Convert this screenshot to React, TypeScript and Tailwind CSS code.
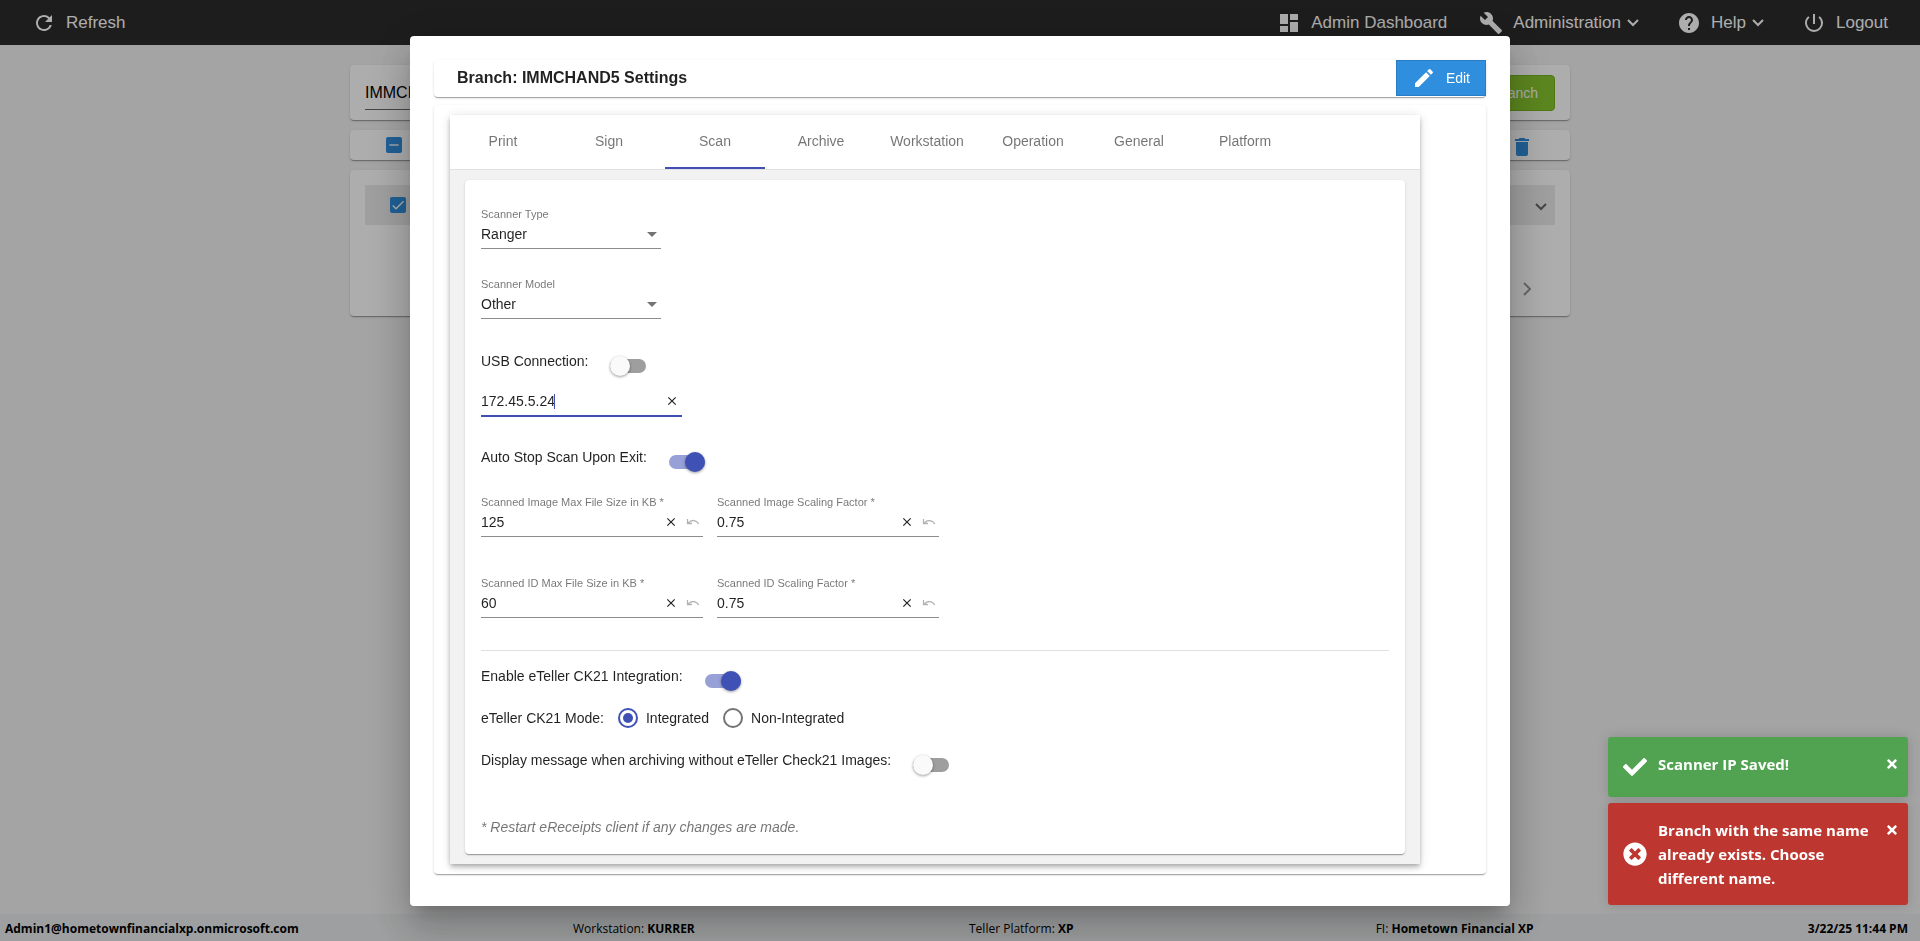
import { useState } from 'react';
import type { ReactNode } from 'react';
import {
    MdBuild,
    MdCheck,
    MdClose,
    MdCreate,
    MdDashboard,
    MdDelete,
    MdHelp,
    MdPowerSettingsNew,
    MdRefresh,
    MdRemove,
} from 'react-icons/md';
import { FaCheck, FaTimes, FaTimesCircle } from 'react-icons/fa';

const cardShadow = 'shadow-[0_2px_1px_-1px_rgba(0,0,0,0.2),0_1px_1px_0_rgba(0,0,0,0.14),0_1px_3px_0_rgba(0,0,0,0.12)]';

const tabs = ['Print', 'Sign', 'Scan', 'Archive', 'Workstation', 'Operation', 'General', 'Platform'];

function Chevron({ className }: { className?: string }) {
    return (
        <svg viewBox="0 0 12 8" className={className} fill="none" stroke="currentColor" strokeWidth="2">
            <path d="M1 1l5 5 5-5" />
        </svg>
    );
}

function NavItem({ icon, label, menu }: { icon: ReactNode; label: string; menu?: boolean }) {
    return (
        <button type="button" className="flex items-center gap-2.5 text-[17px] leading-6">
            {icon}
            <span className="flex items-center">
                {label}
                {menu && <Chevron className="w-3 h-2 mx-1.5" />}
            </span>
        </button>
    );
}

function SelectField({ id, label, options }: { id: string; label: string; options: string[] }) {
    return (
        <div className="w-[180px]">
            <label htmlFor={id} className="block text-[11px] leading-[14px] text-black/55">
                {label}
            </label>
            <div className="relative h-7 pb-0.5 border-b border-black/45">
                <select id={id} className="block w-full h-full appearance-none bg-transparent outline-none">
                    {options.map((o) => (
                        <option key={o}>{o}</option>
                    ))}
                </select>
                <svg viewBox="0 0 10 5" className="absolute right-1 top-[11px] w-2.5 h-[5px] text-black/55 pointer-events-none">
                    <path d="M0 0h10L5 5z" fill="currentColor" />
                </svg>
            </div>
        </div>
    );
}

function NumberField({ id, label, initial }: { id: string; label: string; initial: string }) {
    const [value, setValue] = useState(initial);

    return (
        <div className="w-[222px]">
            <label htmlFor={id} className="block text-[11px] leading-[14px] text-black/55">
                {label} *
            </label>
            <div className="flex items-center gap-2 h-7 pb-0.5 pr-[3px] border-b border-black/45">
                <input
                    id={id}
                    value={value}
                    onChange={(e) => setValue(e.target.value)}
                    className="flex-1 min-w-0 bg-transparent outline-none"
                />
                <button type="button" aria-label="Clear" onClick={() => setValue('')}>
                    <MdClose size={14} />
                </button>
                <button type="button" aria-label="Undo" onClick={() => setValue(initial)} className="text-black/30">
                    <svg viewBox="0 0 14 6" className="w-3.5 h-1.5" fill="none" stroke="currentColor">
                        <path d="M1.500 0v4.500h4.500M2 4.200C5 .8 10 .2 12.800 5" strokeWidth="1.300" />
                    </svg>
                </button>
            </div>
        </div>
    );
}

function Toggle({ id, label, defaultChecked }: { id: string; label: string; defaultChecked?: boolean }) {
    return (
        <div className="flex items-start gap-[22px] h-[22px]">
            <label htmlFor={id} className="leading-5">
                {label}
            </label>
            <input
                id={id}
                type="checkbox"
                role="switch"
                defaultChecked={defaultChecked}
                className="relative mt-2 w-9 h-3.5 rounded-full appearance-none bg-black/38 checked:bg-[#3f51b5]/54 before:absolute before:-top-[3px] before:left-0 before:size-5 before:rounded-full before:bg-[#fafafa] before:shadow-[0_1px_3px_rgba(0,0,0,0.4)] checked:before:left-4 checked:before:bg-[#3f51b5]"
            />
        </div>
    );
}

function Radio({ label, defaultChecked }: { label: string; defaultChecked?: boolean }) {
    return (
        <label className="flex items-center gap-2">
            <input
                type="radio"
                name="ck21-mode"
                defaultChecked={defaultChecked}
                className="relative size-5 rounded-full appearance-none border-2 border-black/55 checked:border-[#3f51b5] checked:before:absolute checked:before:inset-[3px] checked:before:rounded-full checked:before:bg-[#3f51b5]"
            />
            {label}
        </label>
    );
}

function CheckBox({ label, children }: { label: string; children: ReactNode }) {
    return (
        <label className="relative block size-4">
            <input type="checkbox" aria-label={label} className="block size-4 rounded-xs appearance-none bg-[#308ede]" />
            <span className="absolute inset-0 text-white pointer-events-none">{children}</span>
        </label>
    );
}

function Toast({ icon, color, children }: { icon: ReactNode; color: string; children: ReactNode }) {
    const [open, setOpen] = useState(true);
    if (!open) return null;

    return (
        <div className={`flex gap-[11px] min-h-[60px] w-[300px] px-[15px] py-[15px] rounded-[3px] text-white shadow-[0_0_12px_rgba(0,0,0,0.15)] ${color}`}>
            <span className="self-center shrink-0">{icon}</span>
            <p className="flex-1 text-[15px] leading-6 font-bold">{children}</p>
            <button type="button" aria-label="Close" onClick={() => setOpen(false)} className="self-start h-6 -mr-1.5">
                <FaTimes size={14} />
            </button>
        </div>
    );
}

function BranchList() {
    return (
        <main className="flex-1 w-full max-w-[1220px] mx-auto pt-5 text-sm">
            <div className={`flex items-center justify-between h-[55px] px-[15px] rounded bg-white ${cardShadow}`}>
                <input
                    aria-label="Branch name"
                    defaultValue="IMMCHAND5"
                    className="w-[300px] h-[35px] pt-0.5 border-b border-black/60 bg-transparent text-base text-black outline-none"
                />
                <button type="button" className="h-9 px-4 rounded border border-[#78b020] bg-[#88c62d] text-white">
                    Add Branch
                </button>
            </div>

            <div className={`flex items-center justify-between h-[30px] mt-2.5 pl-9 pr-9 rounded bg-white ${cardShadow}`}>
                <CheckBox label="Select all">
                    <MdRemove size={16} />
                </CheckBox>
                <button type="button" aria-label="Delete" className="pt-1 text-[#308ede]">
                    <MdDelete size={24} />
                </button>
            </div>

            <div className={`h-[146px] mt-2.5 px-[15px] pt-[15px] rounded bg-white ${cardShadow}`}>
                <div className="flex items-center justify-between h-10 pl-[25px] pr-2 bg-[#ebebeb]">
                    <CheckBox label="Select branch">
                        <MdCheck size={16} />
                    </CheckBox>
                    <button type="button" aria-label="Expand" className="pt-1 text-[#666]">
                        <Chevron className="w-3 h-2" />
                    </button>
                </div>
                <div className="flex justify-end mt-[57px] pr-6">
                    <button type="button" aria-label="Next page" className="text-black/40">
                        <svg viewBox="0 0 8 14" className="w-2 h-3.5" fill="none" stroke="currentColor" strokeWidth="2">
                            <path d="M1 1l6 6-6 6" />
                        </svg>
                    </button>
                </div>
            </div>
        </main>
    );
}

function ScanSettings() {
    const [ip, setIp] = useState('172.45.5.24');

    return (
        <form className={`px-4 pt-[27px] pb-[17px] rounded bg-white text-sm text-black/87 ${cardShadow}`}>
            <div className="flex flex-col gap-7">
                <SelectField id="scanner-type" label="Scanner Type" options={['Ranger']} />
                <SelectField id="scanner-model" label="Scanner Model" options={['Other']} />
            </div>

            <div className="mt-8">
                <Toggle id="usb" label="USB Connection:" />
            </div>
            <div className="relative flex items-center w-[201px] h-7 mt-4 pb-0.5 pr-[3px] border-b-2 border-[#3f51b5]">
                <input
                    aria-label="Scanner IP"
                    value={ip}
                    onChange={(e) => setIp(e.target.value)}
                    className="flex-1 min-w-0 bg-transparent outline-none"
                />
                <span className="absolute left-[73px] top-[5px] w-px h-[15px] bg-[#3f51b5]" />
                <button type="button" aria-label="Clear" onClick={() => setIp('')}>
                    <MdClose size={14} />
                </button>
            </div>
            <div className="mt-[30px]">
                <Toggle id="auto-stop" label="Auto Stop Scan Upon Exit:" defaultChecked />
            </div>

            <div className="flex flex-wrap gap-3.5 mt-[26px]">
                <NumberField id="image-size" label="Scanned Image Max File Size in KB" initial="125" />
                <NumberField id="image-scale" label="Scanned Image Scaling Factor" initial="0.75" />
            </div>
            <div className="flex flex-wrap gap-3.5 mt-[39px]">
                <NumberField id="id-size" label="Scanned ID Max File Size in KB" initial="60" />
                <NumberField id="id-scale" label="Scanned ID Scaling Factor" initial="0.75" />
            </div>

            <hr className="mt-8 mb-[15px] border-black/12" />

            <Toggle id="ck21" label="Enable eTeller CK21 Integration:" defaultChecked />
            <div role="radiogroup" className="flex items-center gap-3.5 mt-5 leading-5">
                <span>eTeller CK21 Mode:</span>
                <Radio label="Integrated" defaultChecked />
                <Radio label="Non-Integrated" />
            </div>
            <div className="mt-[22px]">
                <Toggle id="archive-message" label="Display message when archiving without eTeller Check21 Images:" />
            </div>

            <p className="mt-[45px] italic leading-5 text-black/55">* Restart eReceipts client if any changes are made.</p>
        </form>
    );
}

function SettingsDialog() {
    const [active, setActive] = useState('Scan');

    return (
        <div
            role="dialog"
            aria-label="Branch settings"
            className="w-full max-w-[1100px] p-6 pb-8 rounded bg-white shadow-[0_11px_15px_-7px_rgba(0,0,0,0.2),0_24px_38px_3px_rgba(0,0,0,0.14),0_9px_46px_8px_rgba(0,0,0,0.12)]"
        >
            <div className={`flex items-start justify-between h-[37px] pl-[23px] rounded ${cardShadow}`}>
                <h1 className="text-base leading-9 font-bold text-black/87">Branch: IMMCHAND5 Settings</h1>
                <button type="button" className="flex items-center gap-2.5 h-9 px-[15px] border border-[#2a7cc4] bg-[#308ede] text-sm text-white">
                    <MdCreate size={24} />
                    Edit
                </button>
            </div>

            <div className={`mt-2 px-4 py-2.5 rounded ${cardShadow}`}>
                <div className="max-w-[970px] bg-[#f2f2f2] shadow-[0_2px_4px_-1px_rgba(0,0,0,0.2),0_4px_5px_0_rgba(0,0,0,0.14),0_1px_10px_0_rgba(0,0,0,0.12)]">
                    <div role="tablist" className="flex gap-1.5 h-[55px] pl-[3px] border-b border-black/12 bg-white">
                        {tabs.map((tab) => (
                            <button
                                key={tab}
                                type="button"
                                role="tab"
                                aria-selected={tab === active}
                                onClick={() => setActive(tab)}
                                className={`w-[100px] border-b-2 text-sm text-black/55 ${tab === active ? 'border-[#3f51b5]' : 'border-transparent'}`}
                            >
                                {tab}
                            </button>
                        ))}
                    </div>
                    <div className="px-[15px] py-2.5">
                        <ScanSettings />
                    </div>
                </div>
            </div>
        </div>
    );
}

export default function App() {
    return (
        <div className="flex flex-col min-h-screen bg-[#f2f2f2] font-['Liberation_Sans',Arial,sans-serif]">
            <header className="flex items-center h-[45px] pl-8 pr-8 bg-[#2b2b2b] text-white">
                <NavItem icon={<MdRefresh size={24} />} label="Refresh" />
                <nav className="flex items-center ml-auto gap-8">
                    <NavItem icon={<MdDashboard size={24} />} label="Admin Dashboard" />
                    <NavItem icon={<MdBuild size={24} />} label="Administration" menu />
                    <NavItem icon={<MdHelp size={24} />} label="Help" menu />
                    <NavItem icon={<MdPowerSettingsNew size={24} />} label="Logout" />
                </nav>
            </header>

            <BranchList />

            <footer className="flex items-center justify-between h-[27px] pt-0.5 pl-[5px] pr-3 bg-[#e8ebec] font-['Open_Sans','Segoe_UI',sans-serif] text-xs text-black">
                <b>Admin1@hometownfinancialxp.onmicrosoft.com</b>
                <span>
                    Workstation: <b>KURRER</b>
                </span>
                <span>
                    Teller Platform: <b>XP</b>
                </span>
                <span className="pl-7">
                    FI: <b>Hometown Financial XP</b>
                </span>
                <b>3/22/25 11:44 PM</b>
            </footer>

            <div className="fixed inset-0 flex items-start justify-center pt-9 bg-black/32">
                <SettingsDialog />
            </div>

            <div className="fixed right-3 bottom-9 flex flex-col gap-1.5 font-['Open_Sans','Segoe_UI',sans-serif]">
                <Toast color="bg-[#51a351]" icon={<FaCheck size={24} />}>
                    Scanner IP Saved!
                </Toast>
                <Toast color="bg-[#bd362f]" icon={<FaTimesCircle size={24} />}>
                    Branch with the same name already exists. Choose different name.
                </Toast>
            </div>
        </div>
    );
}
